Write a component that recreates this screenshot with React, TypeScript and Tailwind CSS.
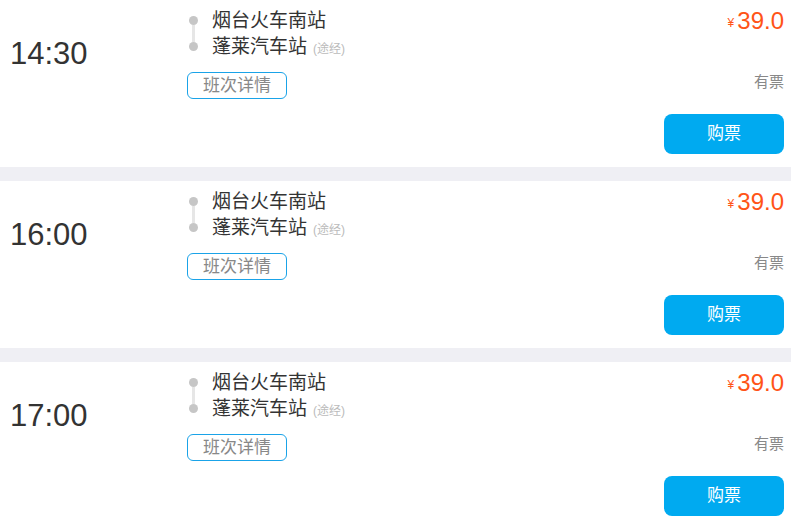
type Trip = {
  time: string;
  from: string;
  to: string;
  price: string;
  stock: string;
};

const trips: Trip[] = [
  { time: '14:30', from: '烟台火车南站', to: '蓬莱汽车站', price: '39.0', stock: '有票' },
  { time: '16:00', from: '烟台火车南站', to: '蓬莱汽车站', price: '39.0', stock: '有票' },
  { time: '17:00', from: '烟台火车南站', to: '蓬莱汽车站', price: '39.0', stock: '有票' },
];

function TripCard({ data }: { data: Trip }) {
  return (
    <div className="flex h-[167px] shrink-0 bg-white pt-[6px]">
      <div className="flex h-[92px] w-[187px] shrink-0 items-center pl-[10px] pt-[4px] text-[31px] text-[#333]">
        {data.time}
      </div>
      <div className="flex-1">
        <div className="mt-[2px] flex">
          <div className="flex w-[25px] flex-col items-center py-[8px] pr-[12px]">
            <span className="h-[9px] w-[9px] rounded-full bg-[#c6c6c6]" />
            <span className="h-[17px] w-[3px] bg-[#e6e6e6]" />
            <span className="h-[9px] w-[9px] rounded-full bg-[#c6c6c6]" />
          </div>
          <div className="text-[19px] leading-[26px] text-[#333]">
            <div>{data.from}</div>
            <div>
              {data.to}
              <span className="ml-[6px] text-[12px] text-[#bbb]">(途经)</span>
            </div>
          </div>
        </div>
        <button className="mt-[10px] flex h-[27px] w-[100px] items-center justify-center rounded-[6px] border border-[#1aa3e8] text-[17px] text-[#888]">
          班次详情
        </button>
      </div>
      <div className="flex flex-col items-end pr-[7px]">
        <div className="flex h-[29px] items-end text-[#ff5417]">
          <span className="mb-[3px] mr-[3px] text-[12px]">¥</span>
          <span className="text-[24px] leading-[28px]">{data.price}</span>
        </div>
        <div className="mt-[37px] text-[15px] leading-[20px] text-[#888]">{data.stock}</div>
        <button className="mt-[22px] flex h-[40px] w-[120px] items-center justify-center rounded-[8px] bg-[#00aaf0] text-[17px] text-white">
          购票
        </button>
      </div>
    </div>
  );
}

export default function App() {
  return (
    <div
      className="flex h-[520px] w-[791px] flex-col gap-[14px] overflow-hidden bg-[#efeff4]"
      style={{ fontFamily: '"Liberation Sans", "Noto Sans CJK SC", sans-serif' }}
    >
      {trips.map((t) => (
        <TripCard key={t.time} data={t} />
      ))}
    </div>
  );
}
